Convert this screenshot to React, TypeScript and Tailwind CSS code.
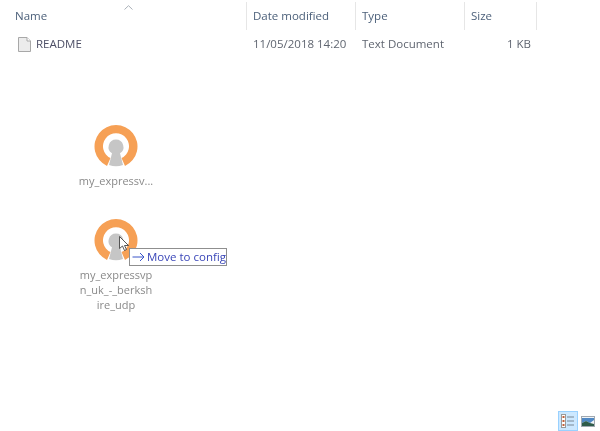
import React from "react";

const font = { fontFamily: '"Open Sans", "Noto Sans", sans-serif' };

function VpnIcon() {
  return (
    <svg width="48" height="48" viewBox="0 0 48 48" className="block">
      <path d="M15 42 A 21.5 21.5 0 1 1 33 42 L 29.5 34 A 13 13 0 1 0 18.5 34 Z" fill="#f6a055" />
      <path d="M24 15.5 a 7.5 7.5 0 0 1 4 13.8 L 31 41 Q 24 43.5 17 41 L 20 29.3 A 7.5 7.5 0 0 1 24 15.5 Z" fill="#c6c6c6" />
    </svg>
  );
}

function Column({ w, children, border = true }: { w: string; children?: React.ReactNode; border?: boolean }) {
  return (
    <div className={`${w} h-full shrink-0 flex items-center pl-[6px] ${border ? "border-r border-[#e6e6e6]" : ""}`}>
      {children}
    </div>
  );
}

function Ghost({ lines, className }: { lines: string[]; className: string }) {
  return (
    <div className={`absolute flex flex-col items-center ${className}`}>
      <VpnIcon />
      <div className="text-[11px] leading-[15px] text-[#8a8a8a] blur-[0.7px] text-center mt-[1px]">
        {lines.map((l) => (
          <div key={l} className="whitespace-nowrap">{l}</div>
        ))}
      </div>
    </div>
  );
}

export default function App() {
  return (
    <div className="relative w-[600px] h-[431px] bg-white overflow-hidden" style={font}>
      <div className="flex h-[28px] mt-[2px] text-[11.5px] text-[#4c607a] blur-[0.25px] relative">
        <div className="w-[247px] h-full shrink-0 flex items-center pl-[15px] border-r border-[#e6e6e6]">Name</div>
        <Column w="w-[109px]">Date modified</Column>
        <Column w="w-[109px]">Type</Column>
        <Column w="w-[72px]">Size</Column>
        <svg className="absolute left-[124px] top-[3px]" width="9" height="5" viewBox="0 0 9 5">
          <path d="M0.5 4.5 L4.5 0.7 L8.5 4.5" fill="none" stroke="#a9b0b8" strokeWidth="1" />
        </svg>
      </div>
      <div className="flex items-center h-[24px] mt-[2px] text-[11.5px] text-[#5f6570] blur-[0.25px]">
        <div className="w-[247px] shrink-0 flex items-center gap-[5px] pl-[18px]">
          <svg width="13" height="15" viewBox="0 0 13 15">
            <path d="M0.5 0.5 H9 L12.5 4 V14.5 H0.5 Z" fill="#ececec" stroke="#a8a8a8" />
            <path d="M9 0.5 V4 H12.5" fill="#fff" stroke="#a8a8a8" />
          </svg>
          <span className="text-[#4d4f66]">README</span>
        </div>
        <div className="w-[109px] shrink-0 pl-[6px]">11/05/2018 14:20</div>
        <div className="w-[109px] shrink-0 pl-[6px]">Text Document</div>
        <div className="w-[66px] shrink-0 text-right">1 KB</div>
      </div>

      <Ghost className="left-[66px] w-[100px] top-[124px]" lines={["my_expressv..."]} />
      <Ghost
        className="left-[66px] w-[100px] top-[218px]"
        lines={["my_expressvp", "n_uk_-_berksh", "ire_udp"]}
      />

      <svg className="absolute left-[119px] top-[236px]" width="11" height="16" viewBox="0 0 11 16">
        <path d="M0.5 0.5 V12.5 L3.5 10 L5.5 14.5 L7.5 13.5 L5.5 9.5 H9.5 Z" fill="#ffffff" stroke="#444" strokeWidth="0.9" />
      </svg>

      <div className="absolute left-[129px] top-[248px] w-[98px] h-[18px] bg-white border border-[#8f8f8f] flex items-center pl-[2px] gap-[2px] text-[11.5px] text-[#3a46b8] blur-[0.2px]">
        <svg width="13" height="10" viewBox="0 0 13 10">
          <path d="M0.5 5 H12 M8 1 L12 5 L8 9" fill="none" stroke="#3a55c8" strokeWidth="1" />
        </svg>
        <span className="whitespace-nowrap">Move to config</span>
      </div>

      <div className="absolute left-[558px] top-[411px] flex items-start gap-[3px]">
        <div className="w-[20px] h-[20px] bg-[#cce8ff] border border-[#99d1ff] flex items-center justify-center">
          <svg width="14" height="14" viewBox="0 0 14 14">
            <rect x="0.5" y="0.5" width="4" height="13" fill="#fff" stroke="#9a9a9a" />
            <rect x="1.5" y="2" width="2" height="2" fill="#c2603a" />
            <rect x="1.5" y="6" width="2" height="2" fill="#c2603a" />
            <rect x="1.5" y="10" width="2" height="2" fill="#c2603a" />
            <path d="M6 3 H13 M6 7 H13 M6 11 H13" stroke="#7a8894" strokeWidth="1" />
          </svg>
        </div>
        <div className="pt-[5px]">
          <svg width="14" height="11" viewBox="0 0 14 11">
            <rect x="0.5" y="0.5" width="13" height="10" fill="#eef3f7" stroke="#a0a8b0" />
            <path d="M1 2 H13 V4 L9 7 L5 5 L1 7 Z" fill="#4f88c4" />
            <path d="M1 7 L5 5 L9 7 L13 8 V10 H1 Z" fill="#2f5c4a" />
          </svg>
        </div>
      </div>
    </div>
  );
}
